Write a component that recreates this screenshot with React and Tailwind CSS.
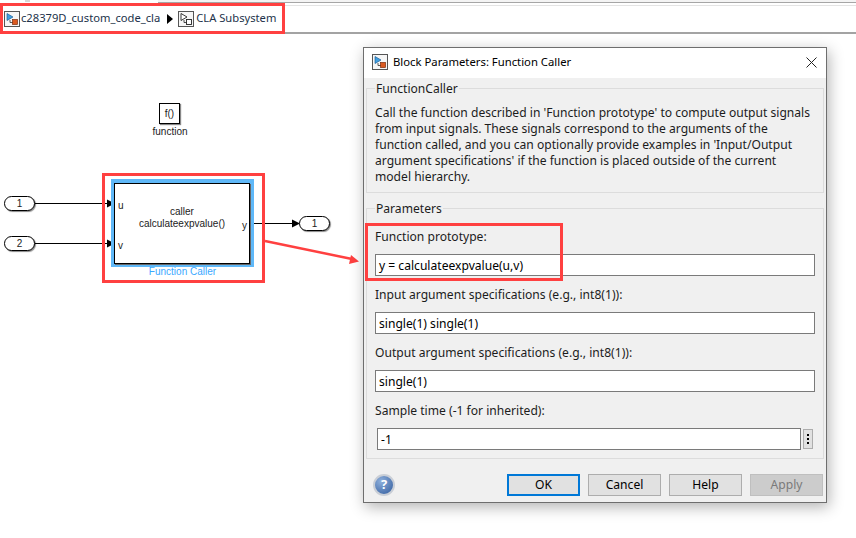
const FONT = "font-['Noto_Sans','Open_Sans',sans-serif]"
const DIAGRAM = "font-['Liberation_Sans',sans-serif] text-[10px] text-[#222]"

function ModelIcon() {
  return (
    <svg width="16" height="16" viewBox="0 0 16 16" className="shrink-0">
      <rect x="0.5" y="0.5" width="15" height="15" fill="#f6f6f6" stroke="#555" />
      <path d="M3 2.5 L9 6 L3 9.5 Z" fill="#3f9fe0" stroke="#1e5f96" strokeWidth="0.7" />
      <path d="M6 9 V11.5 H9" fill="none" stroke="#333" strokeWidth="0.8" />
      <rect x="8.5" y="8.5" width="5" height="5" fill="#dc5a20" stroke="#7a2c0c" strokeWidth="0.7" />
    </svg>
  )
}

function SubsystemIcon() {
  return (
    <svg width="16" height="16" viewBox="0 0 16 16" className="shrink-0">
      <rect x="0.5" y="0.5" width="15" height="15" fill="#f6f6f6" stroke="#555" />
      <path d="M3 2.5 L9 6 L3 9.5 Z" fill="#fff" stroke="#222" strokeWidth="0.9" />
      <path d="M6 9 V11.5 H9" fill="none" stroke="#222" strokeWidth="0.8" />
      <rect x="8.5" y="8.5" width="5" height="5" fill="#fff" stroke="#222" strokeWidth="0.9" />
    </svg>
  )
}

function Port({ n, className }) {
  return (
    <div className={`absolute w-[31px] h-[15px] rounded-full border border-black bg-white shadow-[1px_1px_1px_#888] flex items-center justify-center ${DIAGRAM} ${className}`}>
      {n}
    </div>
  )
}

// signal line drawn with its arrow head
function Signal({ className, width }) {
  return (
    <svg className={`absolute ${className}`} width={width} height="9" viewBox={`0 0 ${width} 9`}>
      <line x1="0" y1="4.5" x2={width - 6} y2="4.5" stroke="#000" strokeWidth="1" />
      <path d={`M${width - 8} 0.5 L${width} 4.5 L${width - 8} 8.5 Z`} fill="#000" />
    </svg>
  )
}

function Field({ label, value }) {
  return (
    <div className="flex flex-col">
      <div className="h-[22px] text-[12.1px] leading-[22px] text-[#1c1c1c]">{label}</div>
      <div className="mt-[6px] h-[22px] border border-[#7a7a7a] bg-white px-[3px] text-[12.1px] leading-[21px] text-black">{value}</div>
    </div>
  )
}

function Btn({ children, className }) {
  return (
    <button className={`w-[73px] h-[22px] text-[12.1px] leading-none border ${className}`}>{children}</button>
  )
}

export default function App() {
  return (
    <div className={`relative w-[856px] h-[538px] overflow-hidden bg-white ${FONT}`}>
      {/* toolbar strip */}
      <div className="flex h-[3px]">
        <div className="w-[158px] flex items-start pl-[25px]">
          <div className="w-[5px] h-[2px] bg-[#d8d8d8]" />
        </div>
        <div className="flex-1 border-b border-[#a6a6a6] bg-[#f4f4f4]" />
      </div>
      <div className="mt-[2px] ml-[285px] h-[1px] bg-[#e4e4e4]" />
      <div className="mt-[26px] ml-[285px] h-[2px] bg-[#a3a3a3]" />

      {/* breadcrumb */}
      <div className="absolute left-0 top-[3px] w-[285px] h-[31px] border-[3px] border-[#ff4040] bg-white flex items-center pl-[1px] text-[11.2px] text-[#22324a]">
        <ModelIcon />
        <span className="ml-[1px]">c28379D_custom_code_cla</span>
        <span className="ml-[7px] mr-[5px] w-0 h-0 border-y-[5px] border-y-transparent border-l-[6px] border-l-black" />
        <SubsystemIcon />
        <span className="ml-[2px] whitespace-nowrap">CLA Subsystem</span>
      </div>

      {/* model canvas */}
      <div className={`absolute left-[159px] top-[103px] w-[21px] h-[21px] border border-black bg-white shadow-[1px_1px_1px_#888] flex items-center justify-center ${DIAGRAM}`}>f()</div>
      <div className={`absolute left-[140px] top-[125px] w-[60px] text-center leading-[13px] ${DIAGRAM}`}>function</div>

      <Port n="1" className="left-[4px] top-[196px]" />
      <Port n="2" className="left-[4px] top-[236px]" />
      <Signal className="left-[35px] top-[199px]" width={80} />
      <Signal className="left-[35px] top-[239px]" width={80} />
      <Signal className="left-[251px] top-[219px]" width={49} />
      <Port n="1" className="left-[299px] top-[216px]" />

      <div className="absolute left-[102px] top-[173px] w-[163px] h-[110px] border-[3px] border-[#ff4040]" />
      <div className="absolute left-[111px] top-[179px] w-[143px] h-[88px] bg-[#5fb8f8] pl-[3px] pt-[4px]">
        <div className={`relative w-[136px] h-[81px] border border-black bg-white shadow-[1px_1px_0_#666] ${DIAGRAM}`}>
          <div className="flex flex-col items-center pt-[22px] leading-[12px]">
            <span>caller</span>
            <span>calculateexpvalue()</span>
          </div>
          <span className="absolute left-[3px] top-[14px]">u</span>
          <span className="absolute left-[3px] top-[54px]">v</span>
          <span className="absolute right-[2px] top-[34px]">y</span>
        </div>
      </div>
      <div className="absolute left-[101px] top-[265px] w-[163px] text-center text-[10px] leading-[13px] text-[#3aa8ff] font-['Liberation_Sans',sans-serif]">Function Caller</div>

      {/* red arrow */}
      <svg className="absolute left-[264px] top-[238px]" width="100" height="30" viewBox="0 0 100 30">
        <line x1="1" y1="3" x2="88" y2="21" stroke="#ff4040" strokeWidth="2.5" />
        <path d="M95 23.5 L85 26 L87 17 Z" fill="#ff4040" />
      </svg>

      {/* dialog window */}
      <div className="absolute left-[363px] top-[47px] w-[464px] h-[456px] border border-[#6e6e6e] bg-[#f0f0f0] shadow-[2px_4px_14px_rgba(0,0,0,0.3)] flex flex-col">
        <div className="h-[30px] bg-white flex items-center pl-[8px] pr-[9px] pb-[2px] shrink-0">
          <ModelIcon />
          <span className="ml-[5px] flex-1 text-[11.3px] text-black">Block Parameters: Function Caller</span>
          <svg width="11" height="11" viewBox="0 0 11 11"><path d="M0.5 0.5 L10.5 10.5 M10.5 0.5 L0.5 10.5" stroke="#222" strokeWidth="1" /></svg>
        </div>

        <div className="flex-1 flex flex-col px-[2px] pt-[10px]">
          <div className="relative h-[105px] border border-[#dcdcdc] pl-[8px] pr-[6px] pt-[16px] text-[12.1px] leading-[16px] text-[#1c1c1c] whitespace-nowrap">
            <span className="absolute left-[8px] -top-[8px] bg-[#f0f0f0] px-[1px] leading-[16px]">FunctionCaller</span>
            Call the function described in 'Function prototype' to compute output signals<br />
            from input signals. These signals correspond to the arguments of the<br />
            function called, and you can optionally provide examples in 'Input/Output<br />
            argument specifications' if the function is placed outside of the current<br />
            model hierarchy.
          </div>

          <div className="relative mt-[15px] h-[251px] border border-[#dcdcdc] px-[8px] pt-[17px]">
            <span className="absolute left-[8px] -top-[8px] bg-[#f0f0f0] px-[1px] text-[12.1px] leading-[16px] text-[#1c1c1c]">Parameters</span>
            <div className="flex flex-col gap-[8px]">
              <Field label="Function prototype:" value="y = calculateexpvalue(u,v)" />
              <Field label="Input argument specifications (e.g., int8(1)):" value="single(1) single(1)" />
              <Field label="Output argument specifications (e.g., int8(1)):" value="single(1)" />
              <div className="flex flex-col">
                <div className="h-[22px] text-[12.1px] leading-[22px] text-[#1c1c1c]">Sample time (-1 for inherited):</div>
                <div className="mt-[6px] flex items-center pl-[2px]">
                  <div className="w-[424px] h-[22px] border border-[#7a7a7a] bg-white px-[3px] text-[12.1px] leading-[21px] text-black">-1</div>
                  <div className="ml-[2px] w-[10px] h-[20px] border border-[#adadad] bg-[#e1e1e1] flex flex-col items-center justify-center gap-[2px]">
                    <span className="w-[2px] h-[2px] bg-black" />
                    <span className="w-[2px] h-[2px] bg-black" />
                    <span className="w-[2px] h-[2px] bg-black" />
                  </div>
                </div>
              </div>
            </div>
          </div>

          <div className="flex items-center mt-[15px] pl-[7px] pr-[1px]">
            <div className="w-[22px] h-[22px] rounded-full border-2 border-[#c9ced6] bg-[radial-gradient(circle_at_35%_30%,#8fb0dc,#2f5a9c)] flex items-center justify-center text-[13px] font-bold text-white">?</div>
            <div className="flex-1" />
            <Btn className="border-2 border-[#0078d7] bg-[#e1e1e1] text-black">OK</Btn>
            <Btn className="ml-[8px] border-[#adadad] bg-[#e1e1e1] text-black">Cancel</Btn>
            <Btn className="ml-[8px] border-[#adadad] bg-[#e1e1e1] text-black">Help</Btn>
            <Btn className="ml-[8px] border-[#bfbfbf] bg-[#cccccc] text-[#7a7a7a]">Apply</Btn>
          </div>
        </div>
      </div>

      {/* red highlight over the prototype field */}
      <div className="absolute left-[365px] top-[223px] w-[198px] h-[58px] border-[3px] border-[#ff4040]" />
    </div>
  )
}
